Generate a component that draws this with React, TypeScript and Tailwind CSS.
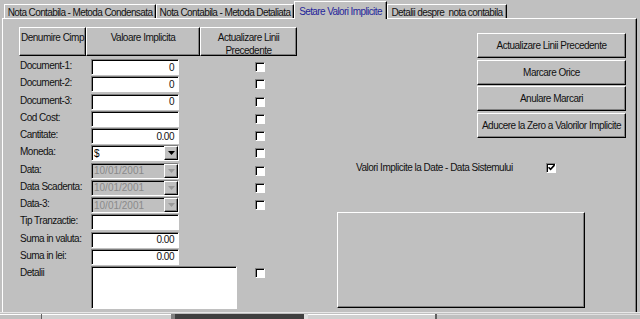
import React from "react";

const raised =
  "border border-t-white border-l-white border-r-black border-b-black shadow-[inset_-1px_-1px_0_#808080]";
const sunken =
  "border border-t-[#808080] border-l-[#808080] border-r-white border-b-white shadow-[inset_1px_1px_0_#000]";

function Check({ checked }: { checked?: boolean }) {
  return (
    <div className={`${sunken} w-[10px] h-[10px] bg-white flex items-center justify-center`}>
      {checked && (
        <svg width="7" height="7" viewBox="0 0 7 7">
          <path d="M0.5 3.2 L2.6 5.4 L6.5 1" fill="none" stroke="#000" strokeWidth="1.6" />
        </svg>
      )}
    </div>
  );
}

function Field({ value }: { value?: string }) {
  return (
    <div className={`${sunken} w-[88px] h-[16px] bg-white flex items-center justify-end pr-[4px]`}>
      {value}
    </div>
  );
}

function Combo({ value, disabled }: { value: string; disabled?: boolean }) {
  return (
    <div
      className={`${sunken} w-[88px] h-[16px] flex items-center ${
        disabled ? "bg-[#c0c0c0] text-[#8a8a8a]" : "bg-white text-black"
      }`}
    >
      <span className="flex-1 pl-[2px] tracking-normal">{value}</span>
      <div className={`${raised} bg-[#c0c0c0] w-[14px] h-full flex items-center justify-center`}>
        <svg width="7" height="4" viewBox="0 0 7 4">
          <path d="M0 0h7L3.5 4z" fill={disabled ? "#9a9a9a" : "#000"} />
        </svg>
      </div>
    </div>
  );
}

const rows: { label: string; control: React.ReactNode; check?: boolean }[] = [
  { label: "Document-1:", control: <Field value="0" />, check: true },
  { label: "Document-2:", control: <Field value="0" />, check: true },
  { label: "Document-3:", control: <Field value="0" />, check: true },
  { label: "Cod Cost:", control: <Field />, check: true },
  { label: "Cantitate:", control: <Field value="0.00" />, check: true },
  { label: "Moneda:", control: <Combo value="$" />, check: true },
  { label: "Data:", control: <Combo value="10/01/2001" disabled />, check: true },
  { label: "Data Scadenta:", control: <Combo value="10/01/2001" disabled />, check: true },
  { label: "Data-3:", control: <Combo value="10/01/2001" disabled />, check: true },
  { label: "Tip Tranzactie:", control: <Field /> },
  { label: "Suma in valuta:", control: <Field value="0.00" /> },
  { label: "Suma in lei:", control: <Field value="0.00" /> },
];

const tabBase =
  "h-[14px] border-t border-l border-t-white border-l-white border-r border-r-black shadow-[inset_-1px_0_0_#808080] flex items-start justify-center pt-[1px] whitespace-nowrap tracking-[-0.6px]";

export default function App() {
  return (
    <div className="w-[640px] h-[319px] bg-[#c0c0c0] overflow-hidden text-[10px] leading-[13px] tracking-[-0.5px] text-[#111] font-['Liberation_Sans',Arial,sans-serif]">
      {/* tabs */}
      <div className="flex items-end h-[18px] pl-[4px]">
        <div className={`${tabBase} w-[152px]`}>Nota Contabila - Metoda Condensata</div>
        <div className={`${tabBase} w-[138px]`}>Nota Contabila - Metoda Detaliata</div>
        <div className="relative z-10 -mb-px w-[93px] h-[18px] bg-[#c0c0c0] border-t border-l border-t-white border-l-white border-r border-r-black shadow-[inset_-1px_0_0_#808080] flex items-start justify-center pt-[3px] text-[#25259a] whitespace-nowrap tracking-[-0.6px]">
          Setare Valori Implicite
        </div>
        <div className={`${tabBase} w-[120px]`}>Detalii despre&nbsp; nota contabila</div>
      </div>

      {/* panel */}
      <div className="ml-[2px] w-[635px] h-[294px] border-t border-l border-t-white border-l-white border-r border-r-black shadow-[inset_-1px_0_0_#808080] flex">
        {/* left column */}
        <div className="w-[294px] pl-[16px] pt-[8px] shrink-0">
          <div className="flex h-[29px]">
            <div className={`${raised} w-[67px] text-center pt-[3px] whitespace-nowrap`}>Denumire Cimp</div>
            <div className={`${raised} w-[114px] text-center pt-[3px] whitespace-nowrap`}>Valoare Implicita</div>
            <div className={`${raised} w-[97px] text-center pt-[3px]`}>
              Actualizare Linii
              <br />
              Precedente
            </div>
          </div>
          <div className="mt-[3px]">
            {rows.map((r) => (
              <div key={r.label} className="flex items-start h-[17.27px]">
                <div className="w-[72px] pl-[1px] whitespace-nowrap">{r.label}</div>
                {r.control}
                {r.check && (
                  <div className="ml-[76px] mt-[3px]">
                    <Check />
                  </div>
                )}
              </div>
            ))}
            <div className="flex items-start">
              <div className="w-[72px] pl-[1px]">Detalii</div>
              <div className={`${sunken} w-[146px] h-[43px] bg-white`} />
              <div className="ml-[18px] mt-[2px]">
                <Check />
              </div>
            </div>
          </div>
        </div>

        {/* right column */}
        <div className="flex-1 flex flex-col pt-[14px]">
          <div className="self-end mr-[10px] flex flex-col gap-[1.5px] w-[149px]">
            {[
              "Actualizare Linii Precedente",
              "Marcare Orice",
              "Anulare Marcari",
              "Aducere la Zero a Valorilor Implicite",
            ].map((t) => (
              <div key={t} className={`${raised} h-[25px] flex items-center justify-center whitespace-nowrap`}>
                {t}
              </div>
            ))}
          </div>
          <div className="flex items-start ml-[59px] mt-[23px]">
            <div className="w-[190px] whitespace-nowrap">Valori Implicite la Date - Data Sistemului</div>
            <div className="mt-[2px]">
              <Check checked />
            </div>
          </div>
          <div className={`${raised} ml-[40px] mt-[38px] w-[248px] h-[96px] bg-[#c0c0c0]`} />
        </div>
      </div>

      {/* bottom strip */}
      <div className="h-[1px] bg-[#e8e8e8]" />
      <div className="flex h-[6px] mt-[1px]">
        <div className="w-[41px] border-t border-t-white" />
        <div className="w-[1px] bg-[#606060]" />
        <div className="w-[129px] bg-[#d0d0d0] border-t border-t-white" />
        <div className="w-[4px] bg-[#808080]" />
        <div className="w-[129px] bg-[#404040]" />
        <div className="w-[4px] bg-[#e0e0e0]" />
        <div className="w-[127px] bg-[#d0d0d0] border-t border-t-white" />
        <div className="w-[2px] bg-[#606060]" />
        <div className="flex-1 border-t border-t-[#e0e0e0]" />
      </div>
    </div>
  );
}
